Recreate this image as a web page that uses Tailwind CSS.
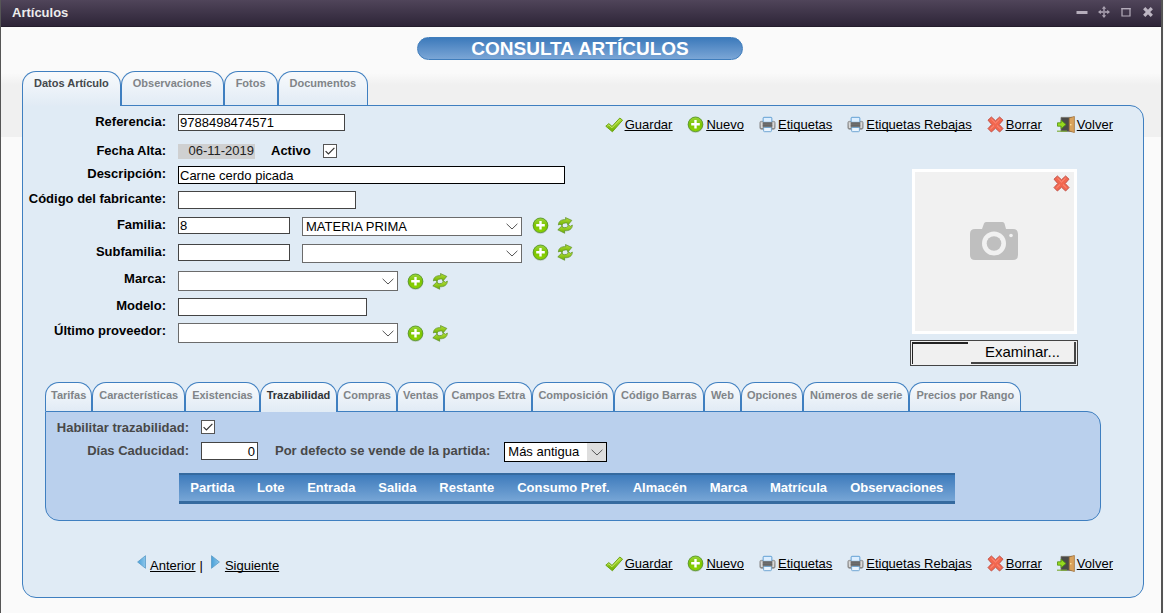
<!DOCTYPE html>
<html lang="es">
<head>
<meta charset="utf-8">
<title>Artículos</title>
<script src="https://cdn.jsdelivr.net/npm/@tailwindcss/browser@4"></script>
</head>
<body class="min-h-screen bg-[#fafafa] font-['Liberation_Sans',Arial,sans-serif] text-[13px] leading-4 text-black">
<svg class="absolute h-0 w-0" aria-hidden="true">
  <defs>
    <linearGradient id="gGreen" x1="0" y1="0" x2="0" y2="1"><stop offset="0" stop-color="#b4e03a"/><stop offset="1" stop-color="#6db000"/></linearGradient>
    <linearGradient id="gPlus" x1="0" y1="0" x2="0" y2="1"><stop offset="0" stop-color="#9bd53c"/><stop offset=".5" stop-color="#7cc400"/><stop offset="1" stop-color="#8ed600"/></linearGradient>
    <linearGradient id="gGray" x1="0" y1="0" x2="0" y2="1"><stop offset="0" stop-color="#bdbdbd"/><stop offset="1" stop-color="#8a8a8a"/></linearGradient>
    <linearGradient id="gBlue" x1="0" y1="0" x2="1" y2="0"><stop offset="0" stop-color="#4aa0d8"/><stop offset="1" stop-color="#8cc6ea"/></linearGradient>
    <symbol id="i-check" viewBox="0 0 18 16">
      <path d="M.8 9.2 3.8 6.6 7 9.4 14.8 1 17.6 3.2 7.4 14.8Z" fill="url(#gGreen)" stroke="#6fa51a" stroke-width="1" stroke-linejoin="round"/>
      <path d="M2.4 9 3.8 7.9 7 10.8 14.8 2.6" fill="none" stroke="#d3f07c" stroke-width=".8"/>
    </symbol>
    <symbol id="i-plus" viewBox="0 0 17 17">
      <circle cx="8.5" cy="8.9" r="7.8" fill="#8aa070" opacity=".5"/>
      <circle cx="8.5" cy="8.3" r="7.3" fill="url(#gPlus)" stroke="#57962a" stroke-width=".9"/>
      <path d="M8.5 4v8.6M4.2 8.3h8.6" stroke="#fff" stroke-width="2.4"/>
    </symbol>
    <symbol id="i-sync" viewBox="0 0 18 18">
      <g fill="url(#gGreen)" stroke="#5f9228" stroke-width=".8" stroke-linejoin="round">
        <path d="M2 8.400C2.200 4.400 5 2.600 9.800 2.800L9.500.600 16.200 3.600 12 8.600 11.500 6.400C8.200 6 6.400 6.600 5.800 9L3.800 7.600Z"/>
        <path d="M16.800 8.600C16.600 12.800 13.600 14.800 8.400 14.600L8.700 17.200 1.400 13.600 6.200 9 6.700 11.200C10 11.600 12 11 12.600 8.400L14.800 9.800Z"/>
      </g>
    </symbol>
    <symbol id="i-print" viewBox="0 0 18 17">
      <rect x="1" y="5.200" width="16" height="8.200" rx="1.400" fill="url(#gGray)" stroke="#858585" stroke-width=".9"/>
      <path d="M2 6.300h2v6H2zM14 6.300h2v6h-2z" fill="#d9d9d9"/>
      <rect x="4.400" y=".900" width="9.200" height="5.300" rx=".800" fill="#dceeff" stroke="#5b9bd0" stroke-width="1"/>
      <rect x="4" y="6" width="10" height="5.600" fill="#737373"/>
      <path d="M4 7.800h10M4 9.600h10" stroke="#5e5e5e" stroke-width=".7"/>
      <rect x="4.900" y="11.600" width="8.200" height="4.500" rx=".800" fill="#eaf5ff" stroke="#6ba3d0" stroke-width="1"/>
    </symbol>
    <symbol id="i-cross" viewBox="0 0 17 17">
      <path d="M4.400 1 8.500 4.800 12.600 1 16 4.200 12.200 8.500 16 12.600 12.600 16 8.500 12.200 4.400 16 1 12.600 4.800 8.500 1 4.200Z" fill="#f2674f" stroke="#c2544a" stroke-width="1" stroke-linejoin="round"/>
      <path d="M4.400 3 8.500 7 12.600 3M3.400 13 7 9.600M13.600 13 10 9.600" fill="none" stroke="#ff9280" stroke-width="1"/>
    </symbol>
    <symbol id="i-door" viewBox="0 0 18 17">
      <path d="M4 1.400h11v14H4z" fill="#4a4a48" stroke="#77736b" stroke-width=".8"/>
      <path d="M12.200 2 17.400.400V16.600L12.200 15Z" fill="#d9a25c" stroke="#9b6c34" stroke-width=".7"/>
      <circle cx="13.800" cy="8.800" r=".8" fill="#fff0a8"/>
      <path d="M.5 6.800h3.600V4.200L9 8.500 4.100 12.800v-2.600H.5Z" fill="#96d91e" stroke="#4f8f13" stroke-width=".8"/>
      <path d="M0 15.200h10" stroke="#7fae3b" stroke-width="1.200"/>
    </symbol>
    <symbol id="i-chevron" viewBox="0 0 12 7"><path d="M.6.800 6 6 11.400.800" fill="none" stroke="#555" stroke-width="1"/></symbol>
    <symbol id="i-tick" viewBox="0 0 12 12"><path d="M1.600 6.200 4.400 9 10.400 2.800" fill="none" stroke="#333" stroke-width="1.200"/></symbol>
  </defs>
</svg>

<div class="mr-px flex min-h-screen flex-col border-r-2 border-l border-[#555]">
  <header class="flex h-[27px] items-center justify-between border-b border-[#241d2c] bg-linear-to-b from-[#50455a] to-[#2e2538] pr-[7px] pl-[11px]">
    <h1 class="pb-px font-bold text-[#ececec]">Artículos</h1>
    <div class="flex items-center gap-[10px] pb-[2px]">
      <button type="button" aria-label="Minimizar" class="block"><svg class="h-3 w-3" viewBox="0 0 12 12"><path d="M.5 5h11v3H.5z" fill="#b5adbb"/></svg></button>
      <button type="button" aria-label="Mover" class="block"><svg class="h-3 w-3" viewBox="0 0 12 12"><path d="M6 1v10M1 6h10" stroke="#958c9d" stroke-width="1.800"/><path d="M6 0 8.200 2.800H3.800ZM6 12 3.800 9.200h4.400ZM0 6l2.800-2.200v4.400ZM12 6 9.200 8.200V3.800Z" fill="#aaa2b1"/></svg></button>
      <button type="button" aria-label="Maximizar" class="block"><svg class="h-3 w-3" viewBox="0 0 12 12"><path d="M2 2.500h8v7.500H2z" fill="none" stroke="#b5adbb" stroke-width="1.200"/><path d="M1.400 2h9.200v1.400H1.400z" fill="#b5adbb"/></svg></button>
      <button type="button" aria-label="Cerrar" class="block"><svg class="h-3 w-3" viewBox="0 0 12 12"><path d="M2.200 2.200 9.800 9.800M9.800 2.200 2.200 9.800" stroke="#bdb6c3" stroke-width="3.200"/></svg></button>
    </div>
  </header>

  <main class="flex-1 bg-[linear-gradient(to_bottom,#fafafa_46px,#f0f0f0_58px,#f0f0f0_110px,#fafafa_110px)] pt-[10px] pr-[17px] pb-[15px] pl-[21px]">
    <div class="pr-[6px]">
      <h2 class="mx-auto h-[23px] w-[326px] rounded-full border border-[#3f7dbc] bg-linear-to-b from-[#3c7abb] to-[#7ba6d6] text-center text-[19px] leading-[21px] font-bold text-white">CONSULTA ARTÍCULOS</h2>
    </div>

    <nav class="mt-[11px] flex text-[11px] font-bold text-[#808488]" aria-label="Secciones">
      <button type="button" class="relative z-10 -mb-px h-[35px] rounded-t-[14px] border border-b-0 border-[#3f7fc0] bg-linear-to-b from-[#f8fafc] to-[#e1ebf5] px-[11px] pb-3 text-[#44484c]">Datos Artículo</button>
      <button type="button" class="h-[34px] rounded-t-[14px] border border-b-0 border-[#3f7fc0] bg-linear-to-b from-[#f8fafc] to-[#e1ebf5] px-[11px] pb-3">Observaciones</button>
      <button type="button" class="h-[34px] rounded-t-[14px] border border-b-0 border-[#3f7fc0] bg-linear-to-b from-[#f8fafc] to-[#e1ebf5] px-[11px] pb-3">Fotos</button>
      <button type="button" class="h-[34px] rounded-t-[14px] border border-b-0 border-[#3f7fc0] bg-linear-to-b from-[#f8fafc] to-[#e1ebf5] px-[11px] pb-3">Documentos</button>
    </nav>

    <form class="rounded-[14px] rounded-tl-none border border-[#3f7fc0] bg-[#e0ebf5] pt-2 pb-[23px]">
      <div class="flex justify-between">
        <div class="grid grid-cols-[143px_auto] grid-rows-[29px_23px_25px_26px_27px_27px_27px_25px_20px] items-start gap-x-3">
          <label for="ref" class="text-right font-bold whitespace-nowrap">Referencia:</label>
          <input id="ref" value="9788498474571" class="h-[17px] w-[167px] border border-[#444] bg-white px-px">

          <label for="fecha" class="text-right font-bold">Fecha Alta:</label>
          <div class="flex items-center">
            <input id="fecha" readonly value="06-11-2019" class="h-[15px] w-[77px] bg-[#cfd0d1] pr-px text-right text-[#222]">
            <label for="activo" class="ml-4 font-bold">Activo</label>
            <span class="ml-3 grid">
              <input id="activo" type="checkbox" checked class="peer col-start-1 row-start-1 h-[14px] w-[14px] appearance-none border border-[#555] bg-white">
              <svg class="pointer-events-none invisible col-start-1 row-start-1 m-px h-3 w-3 peer-checked:visible"><use href="#i-tick"/></svg>
            </span>
          </div>

          <label for="desc" class="text-right font-bold">Descripción:</label>
          <input id="desc" value="Carne cerdo picada" class="h-[18px] w-[387px] border border-black bg-white px-px">

          <label for="codfab" class="justify-self-end font-bold whitespace-nowrap">Código del fabricante:</label>
          <input id="codfab" class="h-[18px] w-[178px] border border-[#444] bg-white px-px">

          <label for="familia" class="text-right font-bold">Familia:</label>
          <div class="flex items-start">
            <input id="familia" value="8" class="h-[17px] w-[112px] border border-[#444] bg-white px-px">
            <span class="ml-3 grid items-center">
              <select aria-label="Nombre de familia" class="col-start-1 row-start-1 h-[19px] w-[220px] appearance-none border border-[#6b6b6b] bg-white pl-[3px]"><option>MATERIA PRIMA</option></select>
              <svg class="pointer-events-none col-start-1 row-start-1 mr-1 h-[7px] w-3 justify-self-end"><use href="#i-chevron"/></svg>
            </span>
            <button type="button" aria-label="Añadir familia" class="ml-[10px]"><svg class="h-[17px] w-[17px]"><use href="#i-plus"/></svg></button>
            <button type="button" aria-label="Recargar familias" class="ml-[7px]"><svg class="h-[17px] w-[18px]"><use href="#i-sync"/></svg></button>
          </div>

          <label for="subfamilia" class="text-right font-bold">Subfamilia:</label>
          <div class="flex items-start">
            <input id="subfamilia" class="h-[17px] w-[112px] border border-[#444] bg-white px-px">
            <span class="ml-3 grid items-center">
              <select aria-label="Nombre de subfamilia" class="col-start-1 row-start-1 h-[19px] w-[220px] appearance-none border border-[#6b6b6b] bg-white pl-[3px]"><option></option></select>
              <svg class="pointer-events-none col-start-1 row-start-1 mr-1 h-[7px] w-3 justify-self-end"><use href="#i-chevron"/></svg>
            </span>
            <button type="button" aria-label="Añadir subfamilia" class="ml-[10px]"><svg class="h-[17px] w-[17px]"><use href="#i-plus"/></svg></button>
            <button type="button" aria-label="Recargar subfamilias" class="ml-[7px]"><svg class="h-[17px] w-[18px]"><use href="#i-sync"/></svg></button>
          </div>

          <label for="marca" class="text-right font-bold">Marca:</label>
          <div class="flex items-center">
            <span class="grid items-center">
              <select id="marca" class="col-start-1 row-start-1 h-5 w-[220px] appearance-none border border-[#6b6b6b] bg-white pl-[3px]"><option></option></select>
              <svg class="pointer-events-none col-start-1 row-start-1 mr-1 h-[7px] w-3 justify-self-end"><use href="#i-chevron"/></svg>
            </span>
            <button type="button" aria-label="Añadir marca" class="ml-[9px]"><svg class="h-[17px] w-[17px]"><use href="#i-plus"/></svg></button>
            <button type="button" aria-label="Recargar marcas" class="ml-[7px]"><svg class="h-[17px] w-[18px]"><use href="#i-sync"/></svg></button>
          </div>

          <label for="modelo" class="text-right font-bold">Modelo:</label>
          <input id="modelo" class="h-[18px] w-[189px] border border-[#444] bg-white px-px">

          <label for="proveedor" class="text-right font-bold">Último proveedor:</label>
          <div class="flex items-center">
            <span class="grid items-center">
              <select id="proveedor" class="col-start-1 row-start-1 h-5 w-[220px] appearance-none border border-[#6b6b6b] bg-white pl-[3px]"><option></option></select>
              <svg class="pointer-events-none col-start-1 row-start-1 mr-1 h-[7px] w-3 justify-self-end"><use href="#i-chevron"/></svg>
            </span>
            <button type="button" aria-label="Añadir proveedor" class="ml-[9px]"><svg class="h-[17px] w-[17px]"><use href="#i-plus"/></svg></button>
            <button type="button" aria-label="Recargar proveedores" class="ml-[7px]"><svg class="h-[17px] w-[18px]"><use href="#i-sync"/></svg></button>
          </div>
        </div>

        <div class="flex flex-col items-end pt-[2px] pr-[30px]">
          <div class="flex gap-[15px] whitespace-nowrap underline [text-decoration-skip-ink:none]">
            <a href="#" class="flex items-center gap-[2px]"><svg class="h-4 w-[18px]"><use href="#i-check"/></svg>Guardar</a>
            <a href="#" class="flex items-center gap-[2px]"><svg class="h-[17px] w-[17px]"><use href="#i-plus"/></svg>Nuevo</a>
            <a href="#" class="flex items-center gap-[2px]"><svg class="h-[17px] w-[17px]"><use href="#i-print"/></svg>Etiquetas</a>
            <a href="#" class="flex items-center gap-[2px]"><svg class="h-[17px] w-[17px]"><use href="#i-print"/></svg>Etiquetas Rebajas</a>
            <a href="#" class="flex items-center gap-[2px]"><svg class="h-[17px] w-[17px]"><use href="#i-cross"/></svg>Borrar</a>
            <a href="#" class="flex items-center gap-[2px]"><svg class="h-[17px] w-[18px]"><use href="#i-door"/></svg>Volver</a>
          </div>
          <div class="mt-[36px] mr-[35px] flex flex-col items-center">
            <div class="relative grid h-[165px] w-[165px] place-items-center border-3 border-white bg-[#f1f1f1]">
              <svg class="mb-[22px] h-[38px] w-12" viewBox="0 0 48 38" aria-hidden="true">
                <path d="M5 7h7l2-5.500Q14.500 0 16 0h16.500q1.500 0 2 1.500L36 7h7q5 0 5 5v21q0 5-5 5H5q-5 0-5-5V12Q0 7 5 7Z" fill="#bfbfbf"/>
                <circle cx="24" cy="21.500" r="12" fill="#f1f1f1"/><circle cx="24" cy="21.500" r="7.300" fill="#bfbfbf"/><circle cx="41" cy="13.500" r="1.800" fill="#f1f1f1"/>
              </svg>
              <button type="button" aria-label="Quitar foto" class="absolute top-[3px] right-[4px]"><svg class="h-[17px] w-[17px]"><use href="#i-cross"/></svg></button>
            </div>
            <div class="mt-[6px] flex h-[26px] w-[168px] border border-[#444] bg-[#f0f0f0] p-px">
              <input aria-label="Archivo" readonly class="min-w-0 flex-1 border-t-2 border-l border-[#222] bg-[#f0f0f0]">
              <button type="button" class="ml-[3px] w-[105px] border-r-2 border-b-2 border-[#444] text-[15px]">Examinar...</button>
            </div>
          </div>
        </div>
      </div>

      <section class="mt-4 mr-[42px] ml-[22px]">
        <nav class="flex text-[11px] font-bold whitespace-nowrap text-[#808488]" aria-label="Detalles">
          <button type="button" class="h-[29px] rounded-t-[14px] border border-b-0 border-[#3f7fc0] bg-linear-to-b from-[#f8fafc] to-[#e1ebf5] px-[5px] pb-1">Tarifas</button>
          <button type="button" class="h-[29px] rounded-t-[14px] border border-b-0 border-[#3f7fc0] bg-linear-to-b from-[#f8fafc] to-[#e1ebf5] px-[6px] pb-1">Características</button>
          <button type="button" class="h-[29px] rounded-t-[14px] border border-b-0 border-[#3f7fc0] bg-linear-to-b from-[#f8fafc] to-[#e1ebf5] px-[6px] pb-1">Existencias</button>
          <button type="button" class="relative z-10 -mb-px h-[30px] rounded-t-[14px] border border-b-0 border-[#3f7fc0] bg-linear-to-b from-[#f8fafc] to-[#e1ebf5] px-[6px] pb-[5px] text-[#303438]">Trazabilidad</button>
          <button type="button" class="h-[29px] rounded-t-[14px] border border-b-0 border-[#3f7fc0] bg-linear-to-b from-[#f8fafc] to-[#e1ebf5] px-[5px] pb-1">Compras</button>
          <button type="button" class="h-[29px] rounded-t-[14px] border border-b-0 border-[#3f7fc0] bg-linear-to-b from-[#f8fafc] to-[#e1ebf5] px-[5px] pb-1">Ventas</button>
          <button type="button" class="h-[29px] rounded-t-[14px] border border-b-0 border-[#3f7fc0] bg-linear-to-b from-[#f8fafc] to-[#e1ebf5] px-[6px] pb-1">Campos Extra</button>
          <button type="button" class="h-[29px] rounded-t-[14px] border border-b-0 border-[#3f7fc0] bg-linear-to-b from-[#f8fafc] to-[#e1ebf5] px-[5px] pb-1">Composición</button>
          <button type="button" class="h-[29px] rounded-t-[14px] border border-b-0 border-[#3f7fc0] bg-linear-to-b from-[#f8fafc] to-[#e1ebf5] px-[6px] pb-1">Código Barras</button>
          <button type="button" class="h-[29px] rounded-t-[14px] border border-b-0 border-[#3f7fc0] bg-linear-to-b from-[#f8fafc] to-[#e1ebf5] px-[6px] pb-1">Web</button>
          <button type="button" class="h-[29px] rounded-t-[14px] border border-b-0 border-[#3f7fc0] bg-linear-to-b from-[#f8fafc] to-[#e1ebf5] px-[5px] pb-1">Opciones</button>
          <button type="button" class="h-[29px] rounded-t-[14px] border border-b-0 border-[#3f7fc0] bg-linear-to-b from-[#f8fafc] to-[#e1ebf5] px-[6px] pb-1">Números de serie</button>
          <button type="button" class="h-[29px] rounded-t-[14px] border border-b-0 border-[#3f7fc0] bg-linear-to-b from-[#f8fafc] to-[#e1ebf5] px-[6px] pb-1">Precios por Rango</button>
        </nav>
        <div class="rounded-[14px] rounded-tl-none border border-[#3f7fc0] bg-[#bad0ed] pt-2 pb-4">
          <div class="grid grid-cols-[143px_auto] grid-rows-[22px_31px] items-start justify-start gap-x-3 font-bold text-[#484848]">
            <label for="traza" class="text-right whitespace-nowrap">Habilitar trazabilidad:</label>
            <span class="grid justify-start">
              <input id="traza" type="checkbox" checked class="peer col-start-1 row-start-1 h-[14px] w-[14px] appearance-none border border-[#555] bg-white">
              <svg class="pointer-events-none invisible col-start-1 row-start-1 m-px h-3 w-3 peer-checked:visible"><use href="#i-tick"/></svg>
            </span>
            <label for="dias" class="pt-px text-right">Días Caducidad:</label>
            <div class="flex items-start">
              <input id="dias" value="0" class="h-[18px] w-[57px] border border-[#444] bg-white pr-[2px] text-right font-normal text-black">
              <label for="partida" class="ml-[17px] pt-px whitespace-nowrap">Por defecto se vende de la partida:</label>
              <span class="ml-[14px] grid items-center">
                <select id="partida" class="col-start-1 row-start-1 h-5 w-[103px] appearance-none border border-black bg-[linear-gradient(to_right,#fff_82px,#dedede_82px)] pl-[3px] font-normal text-black"><option>Más antigua</option></select>
                <svg class="pointer-events-none col-start-1 row-start-1 mr-1 h-[7px] w-3 justify-self-end"><use href="#i-chevron"/></svg>
              </span>
            </div>
          </div>
          <table class="ml-[133px] h-[31px] w-[776px] border-t-2 border-b-3 border-[#356a9f] bg-linear-to-b from-[#3c7abb] to-[#7ba9d8] text-center whitespace-nowrap text-white">
            <thead><tr>
              <th class="px-[11px]">Partida</th><th class="px-[11px]">Lote</th><th class="px-[11px]">Entrada</th><th class="px-[11px]">Salida</th><th class="px-[11px]">Restante</th><th class="px-[11px]">Consumo Pref.</th><th class="px-[11px]">Almacén</th><th class="px-[11px]">Marca</th><th class="px-[11px]">Matrícula</th><th class="px-[11px]">Observaciones</th>
            </tr></thead>
          </table>
        </div>
      </section>

      <footer class="mt-[34px] flex items-start justify-between pr-[30px] pl-[114px]">
        <div class="flex items-start whitespace-nowrap [text-decoration-skip-ink:none]">
          <svg class="h-[14px] w-[9px]" viewBox="0 0 9 14" aria-hidden="true"><path d="M8.500.700V13.300L.6 7Z" fill="url(#gBlue)" stroke="#5b9cc8" stroke-width=".8" stroke-linejoin="round"/></svg>
          <a href="#" class="ml-1 pt-[3px] underline">Anterior</a>
          <span class="ml-1 pt-[3px]">|</span>
          <svg class="ml-2 h-[14px] w-[9px]" viewBox="0 0 9 14" aria-hidden="true"><path d="M.5.700V13.300L8.400 7Z" fill="url(#gBlue)" stroke="#5b9cc8" stroke-width=".8" stroke-linejoin="round"/></svg>
          <a href="#" class="ml-[5px] pt-[3px] underline">Siguiente</a>
        </div>
        <div class="flex gap-[15px] whitespace-nowrap underline [text-decoration-skip-ink:none]">
          <a href="#" class="flex items-center gap-[2px]"><svg class="h-4 w-[18px]"><use href="#i-check"/></svg>Guardar</a>
          <a href="#" class="flex items-center gap-[2px]"><svg class="h-[17px] w-[17px]"><use href="#i-plus"/></svg>Nuevo</a>
          <a href="#" class="flex items-center gap-[2px]"><svg class="h-[17px] w-[17px]"><use href="#i-print"/></svg>Etiquetas</a>
          <a href="#" class="flex items-center gap-[2px]"><svg class="h-[17px] w-[17px]"><use href="#i-print"/></svg>Etiquetas Rebajas</a>
          <a href="#" class="flex items-center gap-[2px]"><svg class="h-[17px] w-[17px]"><use href="#i-cross"/></svg>Borrar</a>
          <a href="#" class="flex items-center gap-[2px]"><svg class="h-[17px] w-[18px]"><use href="#i-door"/></svg>Volver</a>
        </div>
      </footer>
    </form>
  </main>
</div>
</body>
</html>
